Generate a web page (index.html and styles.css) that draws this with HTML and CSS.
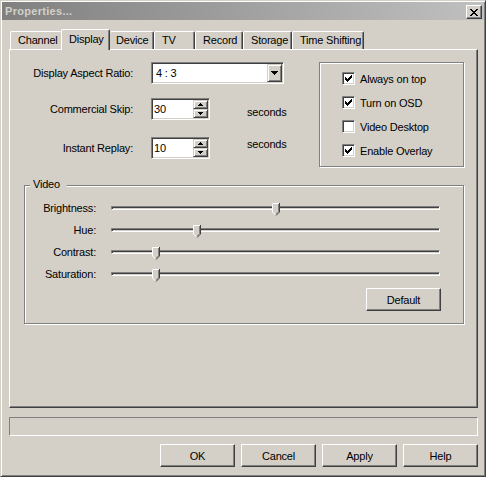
FILE: index.html
```html
<!DOCTYPE html>
<html>
<head>
<meta charset="utf-8">
<title>Properties...</title>
<link rel="stylesheet" href="styles.css">
</head>
<body>
<div class="window">
  <div class="titlebar">
    <span class="title">Properties...</span>
    <span class="close"><svg width="8" height="7" viewBox="0 0 8 7"><path d="M0 0h2v1H0zM6 0h2v1H6zM1 1h2v1H1zM5 1h2v1H5zM2 2h4v1H2zM3 3h2v1H3zM2 4h4v1H2zM1 5h2v1H1zM5 5h2v1H5zM0 6h2v1H0zM6 6h2v1H6z" fill="#000"/></svg></span>
  </div>
  <div class="body">
    <div class="tabs">
      <div class="tab t-channel">Channel</div>
      <div class="tab selected t-display">Display</div>
      <div class="tab t-device">Device</div>
      <div class="tab t-tv">TV</div>
      <div class="tab t-record">Record</div>
      <div class="tab t-storage">Storage</div>
      <div class="tab t-time">Time Shifting</div>
    </div>
    <div class="panel">
      <div class="top">
        <div class="form">
          <span class="lbl">Display Aspect Ratio:</span>
          <div class="combo sunken">
            <span class="combo-text">4 : 3</span>
            <span class="dropbtn raised"><svg width="7" height="4" viewBox="0 0 7 4"><path d="M0 0h7v1H0zM1 1h5v1H1zM2 2h3v1H2zM3 3h1v1H3z" fill="#000"/></svg></span>
          </div>

          <span class="lbl">Commercial Skip:</span>
          <div class="spin sunken">
            <span class="spin-text">30</span>
            <span class="spinbtns">
              <span class="spinbtn raised"><svg width="5" height="3" viewBox="0 0 5 3"><path d="M2 0h1v1H2zM1 1h3v1H1zM0 2h5v1H0z" fill="#000"/></svg></span>
              <span class="spinbtn raised"><svg width="5" height="3" viewBox="0 0 5 3"><path d="M0 0h5v1H0zM1 1h3v1H1zM2 2h1v1H2z" fill="#000"/></svg></span>
            </span>
          </div>
          <span class="secs secs-down">seconds</span>

          <span class="lbl">Instant Replay:</span>
          <div class="spin sunken">
            <span class="spin-text">10</span>
            <span class="spinbtns">
              <span class="spinbtn raised"><svg width="5" height="3" viewBox="0 0 5 3"><path d="M2 0h1v1H2zM1 1h3v1H1zM0 2h5v1H0z" fill="#000"/></svg></span>
              <span class="spinbtn raised"><svg width="5" height="3" viewBox="0 0 5 3"><path d="M0 0h5v1H0zM1 1h3v1H1zM2 2h1v1H2z" fill="#000"/></svg></span>
            </span>
          </div>
          <span class="secs secs-up">seconds</span>
        </div>

        <div class="group checks">
          <div class="check"><span class="box sunken"><svg width="7" height="7" viewBox="0 0 7 7"><path d="M6 0h1v1H6zM5 1h2v1H5zM0 2h1v1H0zM4 2h3v1H4zM0 3h2v1H0zM3 3h3v1H3zM0 4h5v1H0zM1 5h3v1H1zM2 6h1v1H2z" fill="#000"/></svg></span><span>Always on top</span></div>
          <div class="check"><span class="box sunken"><svg width="7" height="7" viewBox="0 0 7 7"><path d="M6 0h1v1H6zM5 1h2v1H5zM0 2h1v1H0zM4 2h3v1H4zM0 3h2v1H0zM3 3h3v1H3zM0 4h5v1H0zM1 5h3v1H1zM2 6h1v1H2z" fill="#000"/></svg></span><span>Turn on OSD</span></div>
          <div class="check"><span class="box sunken"></span><span>Video Desktop</span></div>
          <div class="check"><span class="box sunken"><svg width="7" height="7" viewBox="0 0 7 7"><path d="M6 0h1v1H6zM5 1h2v1H5zM0 2h1v1H0zM4 2h3v1H4zM0 3h2v1H0zM3 3h3v1H3zM0 4h5v1H0zM1 5h3v1H1zM2 6h1v1H2z" fill="#000"/></svg></span><span>Enable Overlay</span></div>
        </div>
      </div>

      <div class="group video">
        <span class="legend">Video</span>
        <div class="srow">
          <span class="slabel">Brightness:</span>
          <div class="track"><svg class="thumb" style="left:160px" width="8" height="13" viewBox="0 0 8 13"><path d="M0 0H8V9L4 13L0 9Z" fill="#d4d0c8"/><path d="M0.5 9V0.5H7" stroke="#fff" fill="none"/><path d="M0.5 9L3.5 12" stroke="#fff" fill="none"/><path d="M7.5 0V9L4 12.5" stroke="#404040" fill="none"/><path d="M6.5 1V8.6L4 11.2" stroke="#808080" fill="none"/></svg></div>
        </div>
        <div class="srow">
          <span class="slabel">Hue:</span>
          <div class="track"><svg class="thumb" style="left:81px" width="8" height="13" viewBox="0 0 8 13"><path d="M0 0H8V9L4 13L0 9Z" fill="#d4d0c8"/><path d="M0.5 9V0.5H7" stroke="#fff" fill="none"/><path d="M0.5 9L3.5 12" stroke="#fff" fill="none"/><path d="M7.5 0V9L4 12.5" stroke="#404040" fill="none"/><path d="M6.5 1V8.6L4 11.2" stroke="#808080" fill="none"/></svg></div>
        </div>
        <div class="srow">
          <span class="slabel">Contrast:</span>
          <div class="track"><svg class="thumb" style="left:40px" width="8" height="13" viewBox="0 0 8 13"><path d="M0 0H8V9L4 13L0 9Z" fill="#d4d0c8"/><path d="M0.5 9V0.5H7" stroke="#fff" fill="none"/><path d="M0.5 9L3.5 12" stroke="#fff" fill="none"/><path d="M7.5 0V9L4 12.5" stroke="#404040" fill="none"/><path d="M6.5 1V8.6L4 11.2" stroke="#808080" fill="none"/></svg></div>
        </div>
        <div class="srow">
          <span class="slabel">Saturation:</span>
          <div class="track"><svg class="thumb" style="left:40px" width="8" height="13" viewBox="0 0 8 13"><path d="M0 0H8V9L4 13L0 9Z" fill="#d4d0c8"/><path d="M0.5 9V0.5H7" stroke="#fff" fill="none"/><path d="M0.5 9L3.5 12" stroke="#fff" fill="none"/><path d="M7.5 0V9L4 12.5" stroke="#404040" fill="none"/><path d="M6.5 1V8.6L4 11.2" stroke="#808080" fill="none"/></svg></div>
        </div>
        <div class="drow"><span class="btn raised-btn">Default</span></div>
      </div>
    </div>
    <div class="status"></div>
    <div class="buttons">
      <span class="btn raised-btn">OK</span>
      <span class="btn raised-btn">Cancel</span>
      <span class="btn raised-btn">Apply</span>
      <span class="btn raised-btn">Help</span>
    </div>
  </div>
</div>
</body>
</html>
```

FILE: styles.css
```css
* { box-sizing: border-box; }
html, body { margin: 0; padding: 0; }
body {
  width: 486px;
  height: 477px;
  overflow: hidden;
  background: #d4d0c8;
  color: #000;
  font-family: "Liberation Sans", Arial, sans-serif;
  font-size: 11px;
  letter-spacing: -0.2px;
}

.window {
  width: 486px;
  height: 477px;
  background: #d4d0c8;
  border: 1px solid;
  border-color: #d4d0c8 #404040 #404040 #d4d0c8;
  box-shadow: inset 1px 1px #fff, inset -1px -1px #808080;
  padding: 1px;
  display: flex;
  flex-direction: column;
}

/* title bar */
.titlebar {
  height: 18px;
  flex: none;
  background: linear-gradient(to right, #808080, #c0c0c0);
  display: flex;
  align-items: center;
  justify-content: space-between;
  padding: 0 2px 0 3px;
}
.title {
  color: #d4d0c8;
  font-weight: bold;
  letter-spacing: 0.3px;
}
.close {
  width: 16px;
  height: 14px;
  margin-top: 2px;
  background: #d4d0c8;
  border: 1px solid;
  border-color: #fff #404040 #404040 #fff;
  box-shadow: inset -1px -1px #808080;
  display: flex;
  align-items: center;
  justify-content: center;
}

/* dialog body */
.body {
  flex: 1;
  display: flex;
  flex-direction: column;
  padding: 9px 6px 0 7px;
}

/* tabs */
.tabs {
  display: flex;
  align-items: flex-end;
  height: 20px;
  padding-left: 1px;
  position: relative;
  z-index: 1;
  flex: none;
}
.tab {
  height: 18px;
  line-height: 17px;
  padding-left: 7px;
  background: #d4d0c8;
  border-top: 1px solid #fff;
  border-left: 1px solid #fff;
  border-right: 1px solid #404040;
  box-shadow: inset -1px 0 #808080;
  border-radius: 2px 2px 0 0;
  white-space: nowrap;
}
.tab.selected {
  height: 21px;
  line-height: 18px;
  margin-bottom: -1px;
}
.t-channel { width: 51px; border-right: none; box-shadow: none; }
.t-display { width: 49px; }
.t-device { width: 44px; border-left: none; padding-left: 6px; }
.t-tv { width: 41px; }
.t-record { width: 48px; }
.t-storage { width: 49px; }
.t-time { width: 72px; }

/* panel */
.panel {
  height: 359px;
  flex: none;
  border: 1px solid;
  border-color: #fff #404040 #404040 #fff;
  box-shadow: inset -1px -1px #808080;
  padding: 12px 13px 0 14px;
}
.top {
  display: flex;
  align-items: flex-start;
}

/* 3D edges */
.sunken {
  border: 1px solid;
  border-color: #808080 #fff #fff #808080;
  box-shadow: inset 1px 1px #404040, inset -1px -1px #d4d0c8;
}
.raised {
  background: #d4d0c8;
  border: 1px solid;
  border-color: #d4d0c8 #404040 #404040 #d4d0c8;
  box-shadow: inset 1px 1px #fff, inset -1px -1px #808080;
  display: flex;
  align-items: center;
  justify-content: center;
}

/* form */
.form {
  display: grid;
  grid-template-columns: 109px 59px auto;
  grid-template-rows: 22px 36px 39px;
  column-gap: 18px;
  align-items: end;
}
.lbl {
  text-align: right;
  line-height: 22px;
  white-space: nowrap;
}
.combo {
  grid-column: span 2;
  width: 133px;
  height: 22px;
  background: #fff;
  display: flex;
  align-items: stretch;
  padding: 1px;
}
.combo-text {
  flex: 1;
  line-height: 18px;
  padding-left: 2px;
  margin-left: 1px;
}
.dropbtn {
  width: 15px;
  height: 18px;
}
.spin {
  width: 59px;
  height: 22px;
  background: #fff;
  display: flex;
  padding: 1px;
}
.spin-text {
  flex: 1;
  line-height: 18px;
  padding-left: 1px;
}
.spinbtns {
  width: 15px;
  display: flex;
  flex-direction: column;
}
.spinbtn {
  height: 9px;
}
.secs {
  margin-left: 19px;
  line-height: 22px;
  white-space: nowrap;
}
.secs-down { margin-bottom: -3px; }
.secs-up { margin-bottom: 4px; }

/* group boxes */
.group {
  border: 1px solid #808080;
  box-shadow: inset 1px 1px #fff, 1px 1px #fff;
}
.checks {
  margin-left: auto;
  width: 145px;
  height: 105px;
  padding: 9px 0 0 22px;
  display: flex;
  flex-direction: column;
  gap: 11px;
}
.check {
  display: flex;
  align-items: center;
  height: 13px;
  gap: 5px;
  white-space: nowrap;
}
.box {
  width: 13px;
  height: 13px;
  background: #fff;
  display: flex;
  align-items: center;
  justify-content: center;
  flex: none;
}

/* video group */
.video {
  position: relative;
  margin-top: 18px;
  height: 139px;
  padding: 11px 23px 0 0;
}
.legend {
  position: absolute;
  left: 5px;
  top: -8px;
  line-height: 13px;
  padding: 0 7px 0 3px;
  background: #d4d0c8;
}
.srow {
  display: grid;
  grid-template-columns: 71px 1fr;
  column-gap: 15px;
  height: 22px;
  align-items: center;
}
.slabel {
  text-align: right;
  white-space: nowrap;
}
.track {
  position: relative;
  height: 4px;
  border: 1px solid;
  border-color: #808080 #fff #fff #808080;
  box-shadow: inset 1px 1px #404040, inset -1px -1px #d4d0c8;
}
.thumb {
  position: absolute;
  top: -4px;
  display: block;
}
.drow {
  display: flex;
  justify-content: flex-end;
  margin-top: 3px;
  margin-right: -1px;
}

/* buttons */
.btn {
  width: 75px;
  height: 23px;
  display: flex;
  align-items: center;
  justify-content: center;
}
.raised-btn {
  background: #d4d0c8;
  border: 1px solid;
  border-color: #fff #404040 #404040 #fff;
  box-shadow: inset -1px -1px #808080;
}

.status {
  flex: none;
  margin-top: 9px;
  height: 19px;
  border: 1px solid;
  border-color: #808080 #fff #fff #808080;
}
.buttons {
  display: flex;
  justify-content: flex-end;
  gap: 6px;
  margin-top: 8px;
}
```
